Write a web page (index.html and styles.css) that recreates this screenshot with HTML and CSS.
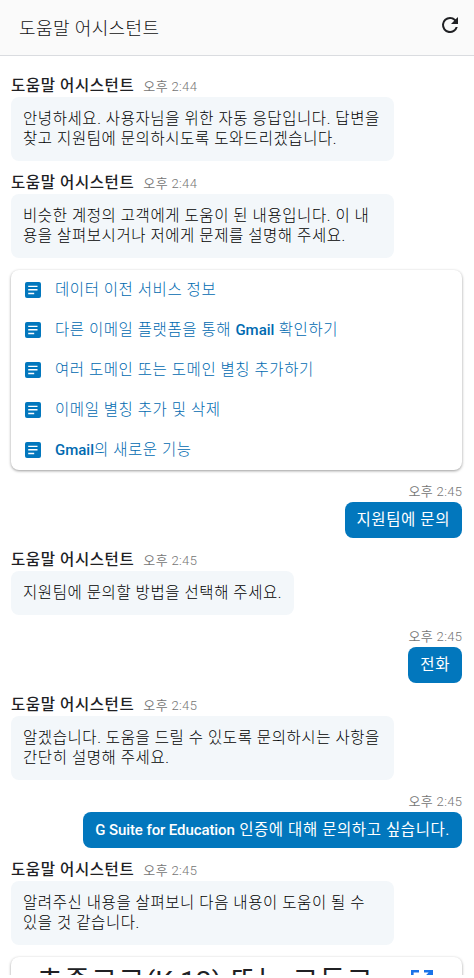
FILE: index.html
```
<!DOCTYPE html>
<html lang="ko">
<head>
  <meta charset="UTF-8">
  <meta name="viewport" content="width=device-width, initial-scale=1.0">
  <title>도움말 어시스턴트</title>
  <link rel="stylesheet" href="styles.css">
</head>
<body>

  <!-- shared icons -->
  <svg class="sprite">
    <symbol id="doc" viewBox="0 0 16 16">
      <rect width="16" height="16" rx="2" fill="currentColor"/>
      <path d="M3.2 4.4h9.3M3.2 7.8h9.3M3.2 11.5h6" stroke="#fff" stroke-width="1.4"/>
    </symbol>
  </svg>

  <div class="app">
    <header class="header">
      <h1>도움말 어시스턴트</h1>
      <button class="refresh" aria-label="새로고침">
        <svg width="24" height="24" viewBox="0 0 24 24"><path fill="#202124" d="M17.65 6.35A7.96 7.96 0 0 0 12 4a8 8 0 1 0 7.73 10h-2.08A6 6 0 1 1 12 6c1.66 0 3.14.69 4.22 1.78L13 11h7V4z"/></svg>
      </button>
    </header>

    <main class="chat">
      <div class="message">
        <div class="meta"><b>도움말 어시스턴트</b><time>오후 2:44</time></div>
        <p class="bubble wide">안녕하세요. 사용자님을 위한 자동 응답입니다. 답변을<br>찾고 지원팀에 문의하시도록 도와드리겠습니다.</p>
      </div>

      <div class="message">
        <div class="meta"><b>도움말 어시스턴트</b><time>오후 2:44</time></div>
        <p class="bubble wide">비슷한 계정의 고객에게 도움이 된 내용입니다. 이 내<br>용을 살펴보시거나 저에게 문제를 설명해 주세요.</p>
      </div>

      <ul class="card links">
        <li><svg class="doc"><use href="#doc"/></svg><a>데이터 이전 서비스 정보</a></li>
        <li><svg class="doc"><use href="#doc"/></svg><a>다른 이메일 플랫폼을 통해 <b>Gmail</b> 확인하기</a></li>
        <li><svg class="doc"><use href="#doc"/></svg><a>여러 도메인 또는 도메인 별칭 추가하기</a></li>
        <li><svg class="doc"><use href="#doc"/></svg><a>이메일 별칭 추가 및 삭제</a></li>
        <li><svg class="doc"><use href="#doc"/></svg><a><b>Gmail</b>의 새로운 기능</a></li>
      </ul>

      <div class="message user">
        <time>오후 2:45</time>
        <p class="bubble">지원팀에 문의</p>
      </div>

      <div class="message">
        <div class="meta"><b>도움말 어시스턴트</b><time>오후 2:45</time></div>
        <p class="bubble">지원팀에 문의할 방법을 선택해 주세요.</p>
      </div>

      <div class="message user">
        <time>오후 2:45</time>
        <p class="bubble">전화</p>
      </div>

      <div class="message">
        <div class="meta"><b>도움말 어시스턴트</b><time>오후 2:45</time></div>
        <p class="bubble wide">알겠습니다. 도움을 드릴 수 있도록 문의하시는 사항을<br>간단히 설명해 주세요.</p>
      </div>

      <div class="message user">
        <time>오후 2:45</time>
        <p class="bubble"><b>G Suite for Education</b> 인증에 대해 문의하고 싶습니다.</p>
      </div>

      <div class="message">
        <div class="meta"><b>도움말 어시스턴트</b><time>오후 2:45</time></div>
        <p class="bubble wide">알려주신 내용을 살펴보니 다음 내용이 도움이 될 수<br>있을 것 같습니다.</p>
      </div>

      <div class="card article">
        <h2>초중고교<span>(K-12)</span> 또는 고등교</h2>
        <svg class="open" width="24" height="24" viewBox="0 0 24 24"><path fill="none" stroke="#1a73e8" stroke-width="2.6" d="M9 3.3H2.3v18.4h18.4V13M14 3.3h7.7V11M21 4L9 16"/></svg>
      </div>
    </main>
  </div>

</body>
</html>
```
FILE: styles.css
```
* {
  box-sizing: border-box;
}

body {
  margin: 0;
  background: #fff;
  color: #202124;
  font-family: Roboto, "Noto Sans CJK KR", sans-serif;
  font-size: 15px;
  line-height: 20px;
}

h1, h2, p, ul {
  margin: 0;
  padding: 0;
}

.sprite {
  display: none;
}

.app {
  height: 975px;
  overflow: hidden;
}

.header {
  display: flex;
  justify-content: space-between;
  height: 56px;
  padding: 13px 12px 0 19px;
  background: #fafafa;
  border-bottom: 1px solid #dadce0;
}

.header h1 {
  color: #111;
  font-size: 18px;
  font-weight: 300;
  line-height: 32px;
  letter-spacing: 0.4px;
}

.refresh {
  width: 24px;
  height: 24px;
  padding: 0;
  border: none;
  background: none;
}

.chat {
  padding: 20px 12px 0 11px;
}

.message {
  display: flex;
  flex-direction: column;
  align-items: flex-start;
  margin-bottom: 12px;
}

.meta {
  display: flex;
  align-items: center;
  height: 21px;
}

.meta b {
  font-size: 15.5px;
  font-weight: 500;
  line-height: 18px;
  letter-spacing: 0.6px;
  margin: 0 9px 1px 0;
}

time {
  color: #757575;
  font-size: 13px;
  font-weight: 350;
  line-height: 20px;
  letter-spacing: 0.35px;
  margin-right: -0.35px;
}

.bubble {
  padding: 12px;
  border-radius: 8px;
  background: #f3f7fa;
  color: #000;
  font-size: 15.5px;
  font-weight: 300;
  white-space: nowrap;
  letter-spacing: 0.58px;
}

.wide {
  width: 383px;
}

.user {
  align-items: flex-end;
}

.user .bubble {
  padding: 8px 12px;
  background: #0277bd;
  color: #fff;
  font-weight: 400;
}

.bubble b {
  font-size: 15px;
  font-weight: 500;
  letter-spacing: -0.1px;
}

.card {
  border-radius: 8px;
  background: #fff;
  box-shadow: 0 1px 3px rgba(0, 0, 0, 0.4);
}

.links {
  height: 200px;
  margin-bottom: 12px;
  list-style: none;
}

.links li {
  display: flex;
  align-items: center;
  height: 40px;
  padding-left: 14px;
  color: #0277bd;
}

.links a {
  color: #006ab0;
  font-size: 15.5px;
  font-weight: 300;
  letter-spacing: 0.56px;
}

.links b {
  font-size: 15px;
  font-weight: 500;
  letter-spacing: 0;
}

.doc {
  width: 16px;
  height: 16px;
  margin-right: 14px;
}

.article {
  display: flex;
  justify-content: space-between;
  height: 80px;
  padding: 0 28px 0 26px;
}

.article h2 {
  font-size: 28px;
  font-weight: 400;
  line-height: 49px;
  letter-spacing: 1.4px;
  white-space: nowrap;
}

.article span {
  letter-spacing: 0.1px;
}

.open {
  margin-top: 11px;
}
```
